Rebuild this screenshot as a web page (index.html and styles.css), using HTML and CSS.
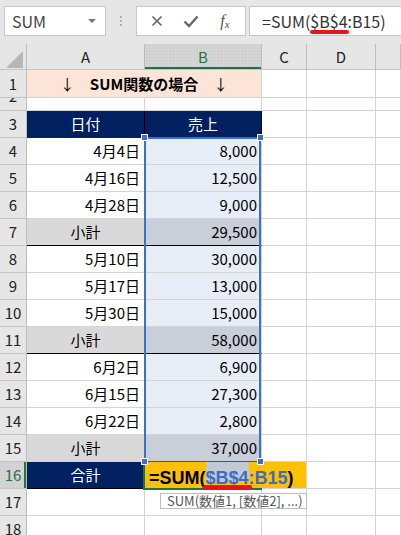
FILE: index.html
```html
<!DOCTYPE html>
<html lang="ja">
<head>
<meta charset="utf-8">
<title>SUM</title>
<link rel="stylesheet" href="styles.css">
</head>
<body>
<div class="app">
  <div class="toolbar">
    <div class="namebox"><span>SUM</span><span class="caret"></span></div>
    <div class="grip"><i></i><i></i><i></i></div>
    <div class="fbtns">
      <span class="slot"><svg width="12" height="12" viewBox="0 0 12 12"><path d="M1.5 1.5 L10.5 10.5 M10.5 1.5 L1.5 10.5" stroke="#666" stroke-width="1.6" fill="none"/></svg></span>
      <span class="slot"><svg width="16" height="14" viewBox="0 0 16 14"><path d="M1.5 7.5 L6 12 L14.5 2.5" stroke="#666" stroke-width="2.4" fill="none" stroke-linejoin="miter"/></svg></span>
      <span class="slot fx">f<span class="sx">x</span></span>
    </div>
    <div class="formula"><span class="ftext">=SUM(<span class="fref">$B$4</span>:B15)</span></div>
  </div>

  <div class="sheet">
    <div class="grid">
      <div class="c h corner"><span class="tri"></span></div><div class="c h">A</div><div class="c h hsel">B</div><div class="c h">C</div><div class="c h">D</div><div class="c h"></div>

      <div class="c h">1</div><div class="c title"><span class="arr">↓</span>　SUM関数の場合　<span class="arr">↓</span></div><div class="c"></div><div class="c"></div><div class="c"></div>

      <div class="c h rh2">2</div><div class="c"></div><div class="c"></div><div class="c"></div><div class="c"></div><div class="c"></div>

      <div class="c h">3</div><div class="c m navy bkr">日付</div><div class="c m navy bkr">売上</div><div class="c"></div><div class="c"></div><div class="c"></div>

      <div class="c h">4</div><div class="c r">4月4日</div><div class="c r sb">8,000</div><div class="c"></div><div class="c"></div><div class="c"></div>
      <div class="c h">5</div><div class="c r">4月16日</div><div class="c r sb">12,500</div><div class="c"></div><div class="c"></div><div class="c"></div>
      <div class="c h">6</div><div class="c r">4月28日</div><div class="c r sb">9,000</div><div class="c"></div><div class="c"></div><div class="c"></div>
      <div class="c h">7</div><div class="c m sub bkb">小計</div><div class="c r subsel bkb">29,500</div><div class="c"></div><div class="c"></div><div class="c"></div>

      <div class="c h">8</div><div class="c r">5月10日</div><div class="c r sb">30,000</div><div class="c"></div><div class="c"></div><div class="c"></div>
      <div class="c h">9</div><div class="c r">5月17日</div><div class="c r sb">13,000</div><div class="c"></div><div class="c"></div><div class="c"></div>
      <div class="c h">10</div><div class="c r">5月30日</div><div class="c r sb">15,000</div><div class="c"></div><div class="c"></div><div class="c"></div>
      <div class="c h">11</div><div class="c m sub bkb">小計</div><div class="c r subsel bkb">58,000</div><div class="c"></div><div class="c"></div><div class="c"></div>

      <div class="c h">12</div><div class="c r">6月2日</div><div class="c r sb">6,900</div><div class="c"></div><div class="c"></div><div class="c"></div>
      <div class="c h">13</div><div class="c r">6月15日</div><div class="c r sb">27,300</div><div class="c"></div><div class="c"></div><div class="c"></div>
      <div class="c h">14</div><div class="c r">6月22日</div><div class="c r sb">2,800</div><div class="c"></div><div class="c"></div><div class="c"></div>
      <div class="c h">15</div><div class="c m sub">小計</div><div class="c r subsel">37,000</div><div class="c"></div><div class="c"></div><div class="c"></div>

      <div class="c h rsel">16</div><div class="c m navy bkb">合計</div><div class="c active"></div><div class="c"></div><div class="c"></div><div class="c"></div>
      <div class="c h">17</div><div class="c"></div><div class="c"></div><div class="c"></div><div class="c"></div><div class="c"></div>
      <div class="c h">18</div><div class="c"></div><div class="c"></div><div class="c"></div><div class="c"></div><div class="c"></div>
    </div>

    <div class="selection"></div>
    <div class="active-border"></div>
    <div class="editor">=SUM(<span class="eref"><span class="hl">$B$4</span>:B15</span>)</div>
    <div class="handle tl"></div>
    <div class="handle tr"></div>
    <div class="handle bl"></div>
    <div class="handle br"></div>
    <div class="tip">SUM(数値1, [数値2], ...)</div>
  </div>
</div>
</body>
</html>
```

FILE: styles.css
```css
* { box-sizing: border-box; }
html, body { margin: 0; padding: 0; }
body {
  width: 401px;
  height: 535px;
  overflow: hidden;
  background: #fff;
  font-family: "Noto Sans CJK JP", "Noto Sans", sans-serif;
  color: #000;
}

/* ---------- formula toolbar ---------- */
.toolbar {
  height: 44px;
  background: #e6e6e6;
  display: flex;
  align-items: flex-start;
  padding-top: 6px;
}
.namebox {
  margin-left: 4px;
  width: 102px;
  height: 30px;
  background: #fff;
  border: 1px solid #c6c6c6;
  display: flex;
  align-items: center;
  justify-content: space-between;
  padding: 0 9px 0 7px;
  font-size: 16px;
  color: #444;
}
.caret {
  width: 0;
  height: 0;
  border-left: 4px solid transparent;
  border-right: 4px solid transparent;
  border-top: 4px solid #777;
}
.grip {
  width: 30px;
  display: flex;
  flex-direction: column;
  align-items: center;
  gap: 2px;
  padding-top: 10px;
}
.grip i { display: block; width: 2px; height: 2px; background: #b0b0b0; }
.fbtns {
  width: 110px;
  height: 30px;
  background: #fff;
  border: 1px solid #c6c6c6;
  display: flex;
  align-items: center;
  padding-left: 3px;
}
.slot {
  width: 34px;
  display: flex;
  align-items: center;
  justify-content: center;
}
.fx {
  font-family: "Liberation Serif", serif;
  font-style: italic;
  font-size: 16px;
  color: #555;
}
.fx .sx { font-size: 11px; position: relative; top: 3px; }
.formula {
  flex: 1;
  margin-left: 3px;
  margin-right: -6px;
  height: 30px;
  background: #fff;
  border: 1px solid #c6c6c6;
  padding-left: 12px;
  font-size: 16px;
  color: #333;
  display: flex;
  align-items: center;
}
.fref { position: relative; }
.fref::after {
  content: "";
  position: absolute;
  left: 0;
  right: -1px;
  top: 21px;
  height: 3.5px;
  border-radius: 2px;
  background: #e8141c;
}

/* ---------- sheet ---------- */
.sheet { position: relative; }
.grid {
  display: grid;
  grid-template-columns: 27px 118px 117px 45px 69px 25px;
  grid-template-rows: 26px 28px 13px 27px repeat(15, 27px);
  font-size: 15px;
  line-height: 20px;
}
.c {
  border-right: 1px solid #d4d4d4;
  border-bottom: 1px solid #d4d4d4;
  display: flex;
  align-items: center;
  padding: 0 4px;
  overflow: hidden;
  white-space: nowrap;
}
.r { justify-content: flex-end; }
.m { justify-content: center; }
.h {
  background: #e6e6e6;
  border-right-color: #bcbcbc;
  border-bottom-color: #c4c4c4;
  justify-content: center;
  color: #222;
  padding: 0;
}
.corner {
  justify-content: flex-end;
  align-items: flex-end;
  padding: 0 3px 1px 0;
}
.tri {
  width: 0;
  height: 0;
  border-bottom: 17px solid #b6b6b6;
  border-left: 17px solid transparent;
}
.hsel {
  background-color: #d4d4d4;
  background-image: radial-gradient(#c6c6c6 0.6px, transparent 0.8px);
  background-size: 3px 3px;
  color: #217346;
  box-shadow: inset 0 -2px 0 #217346;
}
.rsel {
  background-color: #d4d4d4;
  background-image: radial-gradient(#c6c6c6 0.6px, transparent 0.8px);
  background-size: 3px 3px;
  color: #217346;
  box-shadow: inset -2px 0 0 #217346;
}
.rh2 { align-items: flex-end; padding-bottom: 4px; }

.title {
  grid-column: span 2;
  background: #fce4d6;
  justify-content: center;
  font-weight: bold;
  font-size: 15px;
}
.title .arr { font-weight: normal; }
.navy { background: #002060; color: #fff; border-bottom-color: #002060; }
.bkr { border-right-color: #000; }
.bkb { border-bottom-color: #000; }
.sb { background: #e8eef8; }
.sub { background: #d9d9d9; }
.subsel { background: #c9cfd9; }
.active { background: #ffc000; }

/* ---------- overlays ---------- */
.selection {
  position: absolute;
  left: 144px;
  top: 93px;
  width: 117px;
  height: 326px;
  border: 2px solid #3e70c9;
}
.active-border {
  position: absolute;
  left: 143px;
  top: 417px;
  width: 119px;
  height: 29px;
  border: 2px solid #217346;
}
.editor {
  position: absolute;
  left: 145px;
  top: 418px;
  width: 161px;
  height: 26px;
  background: #ffc000;
  padding: 7px 0 0 4px;
  line-height: 19px;
  font-family: "Liberation Sans", Arial, sans-serif;
  font-weight: bold;
  font-size: 18px;
  color: #000;
  white-space: nowrap;
  z-index: 2;
}
.eref { color: #3b6dc6; }
.hl { position: relative; }
.hl::before {
  content: "";
  position: absolute;
  left: 0;
  right: 0;
  top: -6px;
  height: 20px;
  background: #c3c9d3;
  z-index: -1;
}
.hl::after {
  content: "";
  position: absolute;
  left: -3px;
  right: -3px;
  top: 17px;
  height: 4px;
  border-radius: 2px;
  background: #e8141c;
}
.handle {
  position: absolute;
  width: 7px;
  height: 7px;
  background: #3e70c9;
  border: 1px solid #fff;
  z-index: 3;
}
.tl { left: 141px; top: 90px; }
.tr { left: 257px; top: 90px; }
.bl { left: 141px; top: 414px; }
.br { left: 257px; top: 414px; }
.tip {
  position: absolute;
  left: 160px;
  top: 449px;
  width: 147px;
  height: 16px;
  background: #fff;
  border: 1px solid #bdbdbd;
  padding-left: 6px;
  font-size: 13px;
  line-height: 14px;
  color: #555;
  white-space: nowrap;
  z-index: 3;
}
```
